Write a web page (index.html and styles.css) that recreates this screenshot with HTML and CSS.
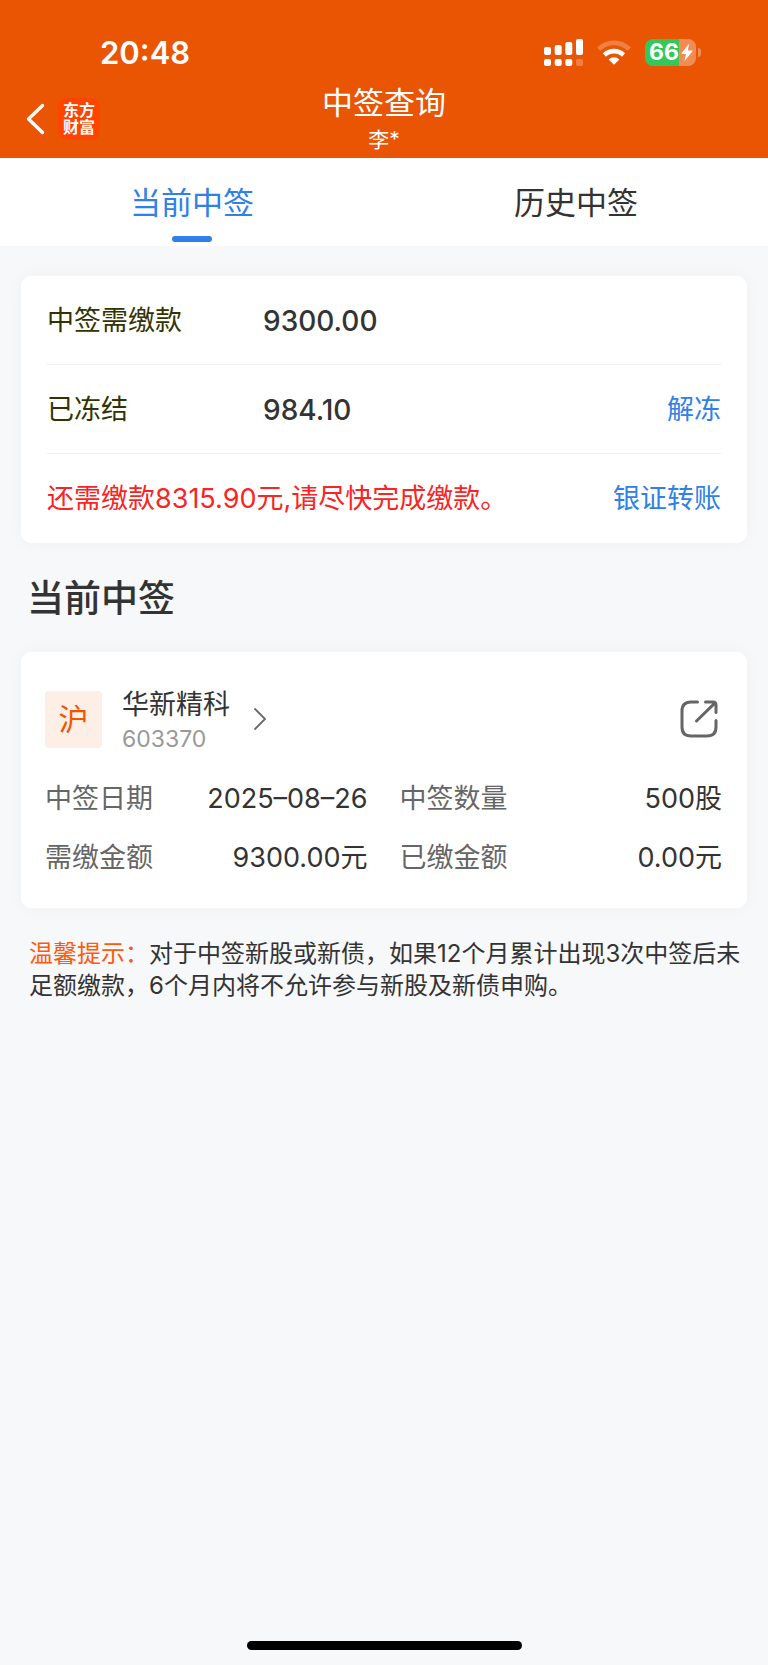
FILE: index.html
```html
<!DOCTYPE html>
<html lang="zh-CN">
<head>
    <meta charset="UTF-8">
    <meta name="viewport" content="width=device-width, initial-scale=1.0">
    <title>中签查询</title>
    <link rel="stylesheet" href="styles.css">
</head>
<body>
  <header class="header">
    <div class="status-bar">
      <span class="time">20:48</span>
      <div class="status-icons">
        <svg width="39" height="27" viewBox="0 0 39 27" fill="#fff">
          <rect x="0" y="8" width="7" height="8" rx="2"/>
          <rect x="10.7" y="6" width="7" height="10" rx="2"/>
          <rect x="21.3" y="3" width="7" height="13" rx="2"/>
          <rect x="32" y="0" width="7" height="16" rx="2"/>
          <rect x="0" y="20" width="7" height="7" rx="2"/>
          <rect x="10.7" y="20" width="7" height="7" rx="2"/>
          <rect x="21.3" y="20" width="7" height="7" rx="2"/>
          <rect x="32" y="20" width="7" height="7" rx="2" opacity=".25"/>
        </svg>
        <svg width="34" height="27" viewBox="0 0 34 27" fill="none" stroke="#fff" stroke-width="4.6">
          <path d="M1.6 10.2A22 22 0 0 1 32.4 10.2" opacity=".25"/>
          <path d="M7.4 16A13.8 13.8 0 0 1 26.6 16"/>
          <path d="M17 25.8L11.6 20.4A7.8 7.8 0 0 1 22.4 20.4Z" fill="#fff" stroke="none"/>
        </svg>
        <div class="battery">
          <span class="battery-body">66<svg width="12" height="19" viewBox="0 0 12 19" fill="#fff"><path d="M8.2 0.5L0.6 10.2Q0.2 11 1 11H5L3.3 18.3L11.4 8.4Q11.8 7.6 11 7.6H6.8Z"/></svg></span>
          <span class="battery-cap"></span>
        </div>
      </div>
    </div>
    <div class="nav">
      <a class="back" href="#" aria-label="返回">
        <svg width="20" height="32" viewBox="0 0 20 32" fill="none" stroke="#fff" stroke-width="3.4" stroke-linecap="round" stroke-linejoin="round"><path d="M16.5 2.5L2.5 16L16.5 29.5"/></svg>
        <span class="logo">东方<br>财富</span>
      </a>
      <div class="title">
        <h1>中签查询</h1>
        <p>李*</p>
      </div>
    </div>
  </header>

  <nav class="tabs">
    <button class="tab active">当前中签</button>
    <button class="tab">历史中签</button>
  </nav>

  <main>
    <section class="card summary">
      <div class="row">
        <span class="label">中签需缴款</span>
        <span class="amount">9300.00</span>
      </div>
      <div class="row">
        <span class="label">已冻结</span>
        <span class="amount">984.10</span>
        <a href="#">解冻</a>
      </div>
      <div class="row">
        <span class="warning">还需缴款8315.90元,请尽快完成缴款。</span>
        <a href="#">银证转账</a>
      </div>
    </section>

    <h2>当前中签</h2>

    <section class="card stock">
      <div class="stock-head">
        <span class="market">沪</span>
        <a class="stock-name" href="#">
          <span class="stock-text">
            <span class="name">华新精科</span>
            <span class="code">603370</span>
          </span>
          <svg width="14" height="24" viewBox="0 0 14 24" fill="none" stroke="#666" stroke-width="1.8"><path d="M1.5 1.5L12 12L1.5 22.5"/></svg>
        </a>
        <button class="share" aria-label="分享">
          <svg width="38" height="38" viewBox="0 0 38 38" fill="none" stroke="#666" stroke-width="3" stroke-linecap="round" stroke-linejoin="round">
            <path d="M17.5 2H11Q2 2 2 11V27Q2 36 11 36H27Q36 36 36 27V20.5"/>
            <path d="M25.5 2H33Q36 2 36 5V12.5M34.8 3.2L16.5 21"/>
          </svg>
        </button>
      </div>
      <dl class="details">
        <div><dt>中签日期</dt><dd>2025–08–26</dd></div>
        <div><dt>中签数量</dt><dd>500股</dd></div>
        <div><dt>需缴金额</dt><dd>9300.00元</dd></div>
        <div><dt>已缴金额</dt><dd>0.00元</dd></div>
      </dl>
    </section>

    <p class="tips"><span>温馨提示：</span>对于中签新股或新债，如果12个月累计出现3次中签后未足额缴款，6个月内将不允许参与新股及新债申购。</p>
  </main>

  <div class="home-indicator"></div>
</body>
</html>
```
FILE: styles.css
```css
* {
  box-sizing: border-box;
  margin: 0;
  padding: 0;
}
body {
  display: flex;
  flex-direction: column;
  min-height: 100vh;
  background-color: #f7f8fa;
  color: #333;
  font-family: Inter, "Noto Sans CJK SC", sans-serif;
  font-size: 27px;
}
a {
  color: #2f80e7;
  text-decoration: none;
}
button {
  border: none;
  background: none;
  font-family: inherit;
  cursor: pointer;
}
svg {
  display: block;
}

/* header */
.header {
  height: 158px;
  padding-top: 32px;
  background-color: #ea5504;
  color: #fff;
}
.status-bar {
  display: flex;
  justify-content: space-between;
  align-items: center;
  height: 40px;
  padding: 0 67px 0 100px;
}
.time {
  font-size: 31px;
  font-weight: 600;
}
.status-icons {
  display: flex;
  align-items: center;
  gap: 14px;
}
.battery {
  display: flex;
  align-items: center;
  gap: 2px;
}
.battery-body {
  display: flex;
  align-items: center;
  gap: 2px;
  width: 51px;
  height: 27px;
  padding-left: 4px;
  border-radius: 8px;
  background: linear-gradient(to right, #34c759 67%, #f28c55 67%);
  font-size: 23px;
  font-weight: 700;
  line-height: 27px;
}
.battery-cap {
  width: 3px;
  height: 9px;
  border-radius: 0 4px 4px 0;
  background-color: #f28c55;
}
.nav {
  display: grid;
  grid-template-columns: 1fr auto 1fr;
  padding: 9px 26px 0;
}
.back {
  display: flex;
  align-items: center;
  gap: 12px;
  height: 76px;
}
.logo {
  width: 42px;
  height: 42px;
  padding-top: 4px;
  border-radius: 9px;
  background-color: #ff4400;
  color: #fff;
  font-size: 16px;
  font-weight: 700;
  line-height: 17px;
  text-align: center;
}
.title {
  text-align: center;
}
.title h1 {
  font-size: 31px;
  font-weight: 400;
  line-height: 44px;
}
.title p {
  font-size: 21px;
  line-height: 30px;
}

/* tabs */
.tabs {
  display: flex;
  height: 88px;
  background-color: #fff;
}
.tab {
  position: relative;
  flex: 1;
  padding-bottom: 3px;
  color: #333;
  font-size: 31px;
}
.tab.active {
  color: #2f80e7;
}
.tab.active::after {
  content: "";
  position: absolute;
  left: 50%;
  bottom: 4px;
  width: 40px;
  height: 6px;
  margin-left: -20px;
  border-radius: 3px;
  background-color: #2f80e7;
}

/* cards */
main {
  padding: 30px 21px;
}
.card {
  border-radius: 10px;
  background-color: #fff;
  box-shadow: 0 0 16px rgba(0, 0, 0, 0.04);
}
.summary {
  padding: 0 26px;
}
.row {
  display: flex;
  height: 89px;
  border-bottom: 1px solid #f0f0f0;
  line-height: 90px;
}
.row:last-child {
  border-bottom: none;
}
.row a {
  margin-left: auto;
}
.label {
  width: 216px;
  color: #333300;
}
.amount {
  font-size: 28px;
  font-weight: 500;
}
.warning {
  color: #fb2323;
}
h2 {
  padding: 29px 6px 27px;
  font-size: 37px;
  font-weight: 500;
  line-height: 53px;
}

/* stock */
.stock {
  padding: 30px 25px 21px 24px;
}
.stock-head {
  display: flex;
  align-items: center;
  margin-bottom: 13px;
}
.market {
  width: 57px;
  height: 57px;
  margin-right: 20px;
  border-radius: 4px;
  background-color: #fdeee6;
  color: #f25500;
  font-size: 30px;
  line-height: 57px;
  text-align: center;
}
.stock-name {
  display: flex;
  align-items: center;
  gap: 23px;
  color: #333;
}
.stock-text {
  padding-top: 6px;
}
.name,
.code {
  display: block;
  line-height: 34px;
}
.code {
  color: #999;
  font-size: 23px;
}
.share {
  margin-left: auto;
  padding-right: 4px;
}
.details {
  display: grid;
  grid-template-columns: 1fr 1fr;
  column-gap: 32px;
}
.details div {
  display: flex;
  justify-content: space-between;
  line-height: 59px;
}
.details dt {
  color: #666;
}

.tips {
  padding: 30px 3px 0 8px;
  font-size: 24px;
  line-height: 32px;
}
.tips span {
  color: #ff5a0c;
}

.home-indicator {
  width: 275px;
  height: 9px;
  margin: auto auto 15px;
  border-radius: 5px;
  background-color: #000;
}
```
